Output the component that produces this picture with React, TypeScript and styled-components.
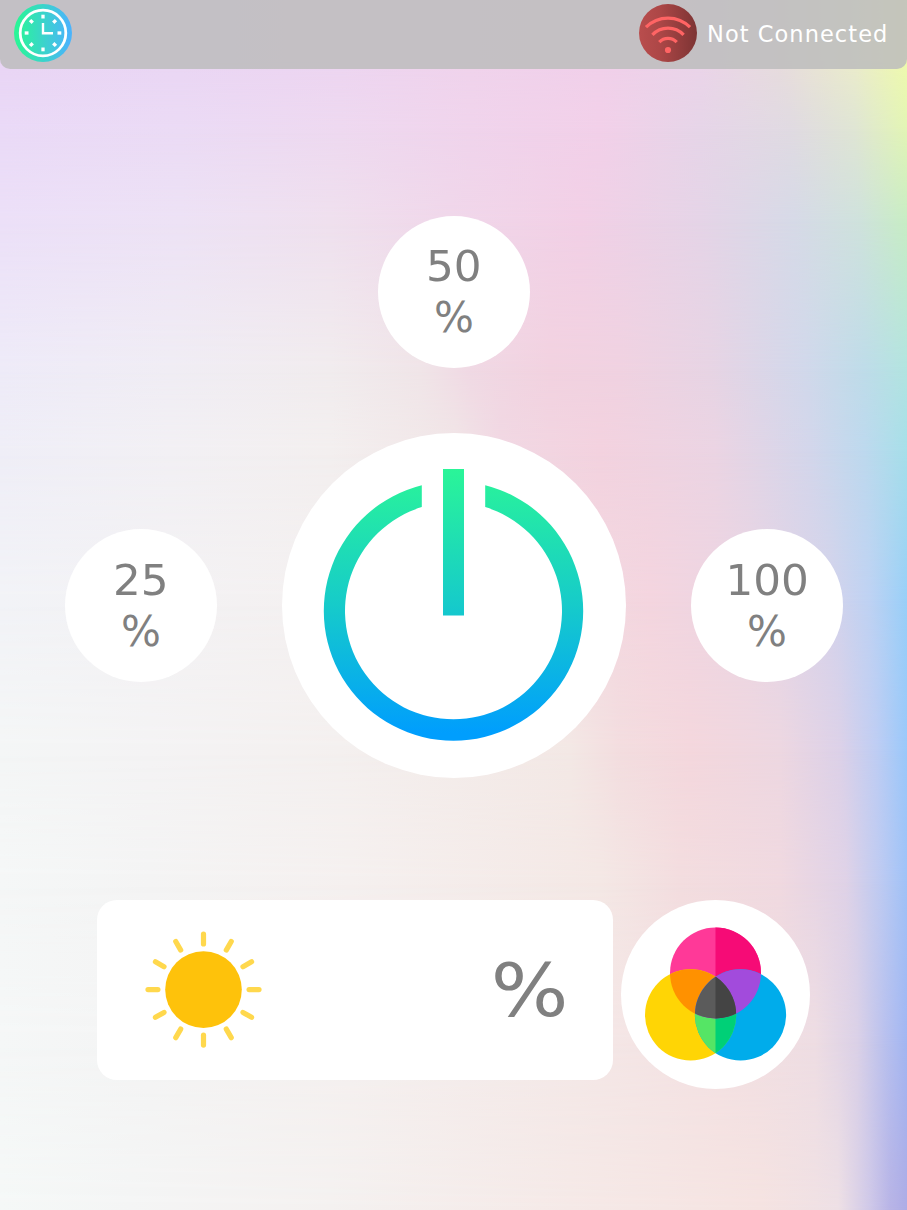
import React from "react";
import styled, { createGlobalStyle } from "styled-components";

const GlobalStyle = createGlobalStyle`
  * { box-sizing: border-box; }
  body { margin: 0; }
`;

const Page = styled.div`
  position: relative;
  isolation: isolate;
  width: 100%;
  height: 1210px;
  overflow: hidden;
  display: flex;
  flex-direction: column;
  align-items: center;
  font-family: "DejaVu Sans", sans-serif;
`;

const Backdrop = styled.div`
  position: absolute;
  inset: 0;
  z-index: -1;
`;

const Band = styled.div<{ $from: number; $to: number; $stops: string }>`
  position: absolute;
  inset: 0;
  background: linear-gradient(90deg, ${(p) => p.$stops});
  mask-image: ${(p) =>
    p.$to === 0
      ? "none"
      : `linear-gradient(180deg, transparent ${p.$from}px, #000 ${p.$to}px)`};
`;

const Header = styled.header`
  width: 100%;
  height: 69px;
  flex: none;
  display: flex;
  justify-content: space-between;
  padding: 4px 19px 0 14px;
  background: rgba(189, 189, 189, 0.86);
  border-radius: 0 0 10px 10px;
`;

const Status = styled.div`
  display: flex;
  width: 249px;
  height: 58px;
  align-items: center;
  gap: 10px;
`;

const StatusText = styled.span`
  color: #fff;
  font-size: 22.5px;
  letter-spacing: 1.05px;
  line-height: 58px;
  padding-top: 1px;
  white-space: nowrap;
`;

const Icon = styled.svg`
  display: block;
  flex: none;
`;

const Controls = styled.main`
  display: flex;
  flex-direction: column;
  align-items: center;
  gap: 65px;
  padding: 147px 0 0 1px;
`;

const ControlRow = styled.div`
  display: flex;
  align-items: center;
  gap: 65px;
`;

const RoundButton = styled.button<{ $size: number; $height?: number }>`
  width: ${(p) => p.$size}px;
  height: ${(p) => p.$height ?? p.$size}px;
  flex: none;
  display: flex;
  flex-direction: column;
  align-items: center;
  justify-content: center;
  padding: 0;
  border: 0;
  border-radius: 50%;
  background: #fff;
  color: #808080;
  font: 42px/51px "DejaVu Sans", sans-serif;
`;

const PowerButton = styled(RoundButton)`
  justify-content: flex-start;
`;

const Digits = styled.span`
  transform: scaleX(1.04);
`;

const Footer = styled.footer`
  display: flex;
  align-items: flex-start;
  gap: 8px;
  margin-top: 122px;
`;

const BrightnessCard = styled.section`
  width: 516px;
  height: 180px;
  display: flex;
  align-items: center;
  justify-content: space-between;
  padding: 0 45px 0 48px;
  border-radius: 20px;
  background: #fff;
`;

const BrightnessValue = styled.span`
  color: #808080;
  font-size: 73px;
  line-height: 88px;
  padding-top: 2px;
  transform: scaleX(1.12);
  transform-origin: right;
`;

const bands: [number, string][] = [
  [60, "#e9d5f5 0, #ead6f4 180px, #edd5f1 340px, #f0d3ec 470px, #f1d0ea 600px, #ebd4e9 700px, #e7dcdd 780px, #ebeccb 855px, #effaad 907px"],
  [130, "#eadaf7 0, #ebdbf5 180px, #eed9f0 340px, #f0d4ec 470px, #f2d0e9 600px, #e6d5e8 700px, #e0dae2 790px, #dfe5d4 855px, #e2f5b5 907px"],
  [220, "#ece0f8 0, #ede2f5 180px, #efe0ee 330px, #f0d7ea 450px, #f2d0e6 580px, #e5d4e7 700px, #d6dae7 795px, #cfe2dc 860px, #c8edc4 907px"],
  [370, "#eeebf8 0, #f0edf4 170px, #f1ecee 330px, #f0e5e8 420px, #f0d9e4 470px, #f2d2e0 550px, #f0d2e1 620px, #e7d4e4 710px, #d1d8eb 805px, #bedce9 865px, #b2e4e0 907px"],
  [450, "#efeef7 0, #f2f0f4 170px, #f3efef 330px, #f1e6e7 455px, #f1d8e3 500px, #f3d2df 600px, #ebd4e3 715px, #d3d6eb 810px, #bdd9ee 865px, #a6dfe9 907px"],
  [600, "#f2f3f7 0, #f3f2f4 150px, #f4f0f0 330px, #f3e9e7 510px, #f2dbe1 570px, #f4d5df 650px, #ead5e3 750px, #d5d3eb 830px, #bed2f3 870px, #99cff8 907px"],
  [750, "#f4f6f6 0, #f4f3f4 150px, #f4f0ef 340px, #f3e8e5 570px, #f3dddf 620px, #f4d7dd 690px, #edd7e1 780px, #dcd1e8 840px, #bfcdf3 876px, #9ac8fa 907px"],
  [880, "#f5f7f7 0, #f4f4f4 150px, #f5f0ef 350px, #f4e8e5 600px, #f3dddf 680px, #f0d9e0 780px, #dfd2e7 846px, #bccaf2 882px, #a0c2f7 907px"],
  [1040, "#f5f7f7 0, #f4f4f4 150px, #f5f0ef 350px, #f4e8e7 580px, #f4e0e2 720px, #eedde3 815px, #dbd1e7 857px, #b8c0ee 886px, #a2b6f2 907px"],
  [1210, "#f5f8f7 0, #f4f5f5 130px, #f4f1f0 330px, #f5e9e7 570px, #f5e3e1 760px, #eee0e5 838px, #cfc8e8 870px, #b8b4e6 890px, #aeace5 907px"],
];

const rayAngles = Array.from({ length: 12 }, (_, i) => i * 30);
const clockMarks = Array.from({ length: 8 }, (_, i) => i * 45);

function ClockIcon() {
  return (
    <Icon width="58" height="58" viewBox="0 0 58 58">
      <defs>
        <linearGradient id="clockFill">
          <stop offset="0.05" stopColor="#2af598" />
          <stop offset="0.95" stopColor="#4ab4fb" />
        </linearGradient>
      </defs>
      <circle cx="29" cy="29" r="29" fill="url(#clockFill)" />
      <g stroke="#fff" fill="none">
        <circle cx="29" cy="29" r="22.8" strokeWidth="2.8" />
        <path d="M29 19V29.2H39" strokeWidth="2.4" />
        {clockMarks.map((a) => (
          <path key={a} d="M29 10.7V14.5" strokeWidth="3.3" transform={`rotate(${a} 29 29)`} />
        ))}
      </g>
    </Icon>
  );
}

function WifiIcon() {
  return (
    <Icon width="58" height="58" viewBox="0 0 58 58">
      <defs>
        <linearGradient id="wifiFill">
          <stop offset="0" stopColor="#b94d4d" />
          <stop offset="0.35" stopColor="#ad4747" />
          <stop offset="1" stopColor="#7d3434" />
        </linearGradient>
      </defs>
      <circle cx="29" cy="29" r="29" fill="url(#wifiFill)" />
      <g stroke="#ff6464" strokeWidth="3.3" fill="none">
        <path d="M7 23.2A31 31 0 0 1 51 23.2" />
        <path d="M13.4 30.8A21.5 21.5 0 0 1 44.6 30.8" />
        <path d="M20.3 38.2A12 12 0 0 1 37.7 38.2" />
      </g>
      <circle cx="29" cy="46" r="3.1" fill="#ff6464" />
    </Icon>
  );
}

function PowerIcon() {
  return (
    <Icon width="344" height="344" viewBox="0 0 344 344">
      <defs>
        <linearGradient id="powerFill" gradientUnits="userSpaceOnUse" x1="0" y1="36" x2="0" y2="308">
          <stop offset="0" stopColor="#2af598" />
          <stop offset="0.5" stopColor="#16cbca" />
          <stop offset="0.97" stopColor="#009efd" />
        </linearGradient>
      </defs>
      <path
        fill="url(#powerFill)"
        d="M161 36H182V182.5H161ZM139.8 52.2A129.7 129.7 0 1 0 203.2 52.2V74.1A108.5 108.5 0 1 1 139.8 74.1Z"
      />
    </Icon>
  );
}

function SunIcon() {
  return (
    <Icon width="117" height="118" viewBox="0 0 117 118">
      {rayAngles.map((a) => (
        <path
          key={a}
          d="M58.5 3.1V13"
          stroke="#ffd84d"
          strokeWidth="5.2"
          strokeLinecap="round"
          transform={`rotate(${a} 58.5 58.6)`}
        />
      ))}
      <circle cx="58.5" cy="58.6" r="38.3" fill="#fec20b" />
    </Icon>
  );
}

function ColorIcon() {
  return (
    <Icon width="189" height="189" viewBox="0 0 189 189">
      <defs>
        <clipPath id="yellowDisc"><circle cx="69.6" cy="114.9" r="45.6" /></clipPath>
        <clipPath id="blueDisc"><circle cx="119.5" cy="114.9" r="45.6" /></clipPath>
        <clipPath id="rightHalf"><path d="M94.5 0H189V189H94.5Z" /></clipPath>
      </defs>
      <circle cx="94.5" cy="73" r="45.5" fill="#ff3998" />
      <circle cx="94.5" cy="73" r="45.5" fill="#f60b76" clipPath="url(#rightHalf)" />
      <circle cx="69.6" cy="114.9" r="45.6" fill="#ffd505" />
      <circle cx="119.5" cy="114.9" r="45.6" fill="#00aceb" />
      <g clipPath="url(#yellowDisc)">
        <circle cx="94.5" cy="73" r="45.5" fill="#ff9100" />
        <circle cx="119.5" cy="114.9" r="45.6" fill="#55e565" />
        <circle cx="119.5" cy="114.9" r="45.6" fill="#00d077" clipPath="url(#rightHalf)" />
      </g>
      <g clipPath="url(#blueDisc)">
        <circle cx="94.5" cy="73" r="45.5" fill="#a24bdc" />
        <g clipPath="url(#yellowDisc)">
          <circle cx="94.5" cy="73" r="45.5" fill="#5b5b5b" />
          <circle cx="94.5" cy="73" r="45.5" fill="#444" clipPath="url(#rightHalf)" />
        </g>
      </g>
    </Icon>
  );
}

function LevelButton({ level, height }: { level: number; height?: number }) {
  return (
    <RoundButton $size={152} $height={height}>
      <Digits>{level}</Digits>
      <span>%</span>
    </RoundButton>
  );
}

export default function App() {
  return (
    <Page>
      <GlobalStyle />
      <Backdrop>
        {bands.map(([y, stops], i) => (
          <Band key={y} $from={i ? bands[i - 1][0] : 0} $to={i ? y : 0} $stops={stops} />
        ))}
      </Backdrop>
      <Header>
        <ClockIcon />
        <Status>
          <WifiIcon />
          <StatusText>Not Connected</StatusText>
        </Status>
      </Header>
      <Controls>
        <LevelButton level={50} />
        <ControlRow>
          <LevelButton level={25} height={153} />
          <PowerButton $size={344} $height={345} aria-label="Power">
            <PowerIcon />
          </PowerButton>
          <LevelButton level={100} height={153} />
        </ControlRow>
      </Controls>
      <Footer>
        <BrightnessCard>
          <SunIcon />
          <BrightnessValue>%</BrightnessValue>
        </BrightnessCard>
        <RoundButton $size={189} aria-label="Colors">
          <ColorIcon />
        </RoundButton>
      </Footer>
    </Page>
  );
}
